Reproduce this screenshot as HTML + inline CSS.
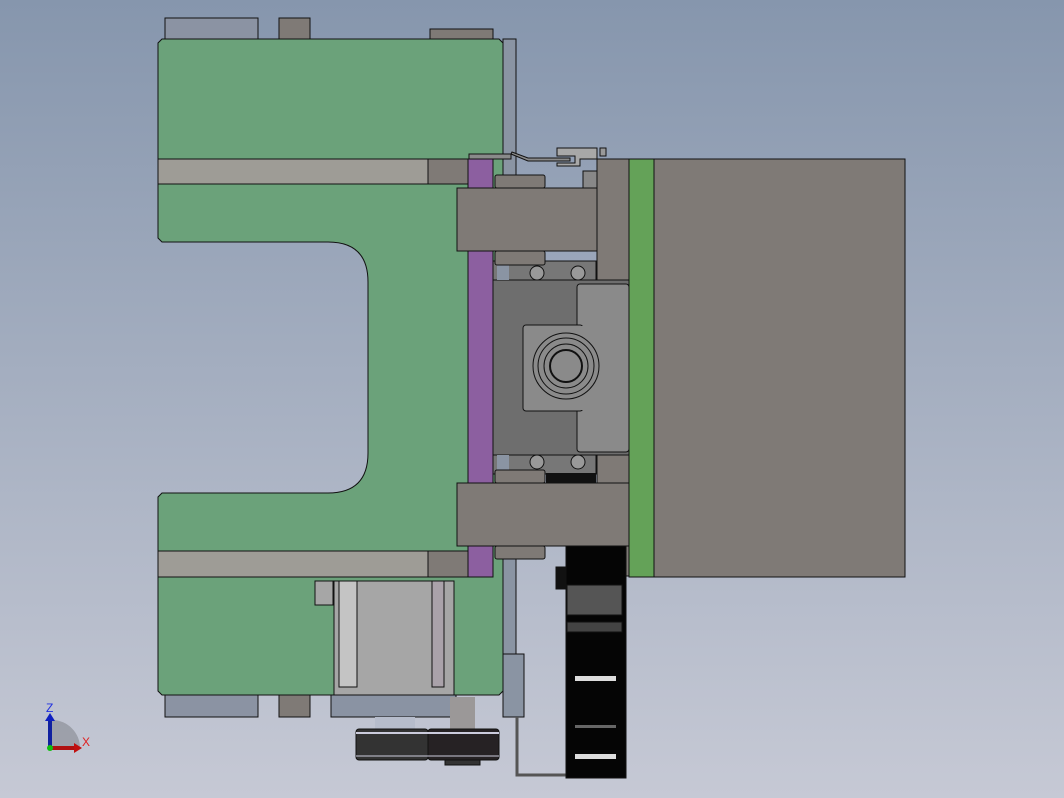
<!DOCTYPE html>
<html><head><meta charset="utf-8"><style>
html,body{margin:0;padding:0;width:1064px;height:798px;overflow:hidden}
svg{display:block}
</style></head><body>
<svg width="1064" height="798" viewBox="0 0 1064 798" xmlns="http://www.w3.org/2000/svg" stroke="#111" stroke-width="1">
<defs>
<linearGradient id="bg" x1="0" y1="0" x2="0" y2="1">
<stop offset="0" stop-color="#8696ad"/><stop offset="1" stop-color="#c6c9d5"/>
</linearGradient>
</defs>
<rect width="1064" height="798" fill="url(#bg)" stroke="none"/>
<!-- top blocks -->
<rect x="165" y="18" width="93" height="21" fill="#8b93a3"/>
<rect x="279" y="18" width="31" height="21" fill="#7f7a76"/>
<rect x="430" y="29" width="63" height="10" fill="#7f7a76"/>
<!-- bottom blocks -->
<rect x="165" y="695" width="93" height="22" fill="#8b93a3"/>
<rect x="279" y="695" width="31" height="22" fill="#7f7a76"/>
<!-- right vertical strip -->
<rect x="503" y="39" width="13" height="615" fill="#8a94a3"/>
<rect x="503" y="654" width="21" height="63" fill="#8a94a3"/>
<!-- wire -->
<path d="M517 717 L517 775 L566 775" fill="none" stroke="#555" stroke-width="3"/>
<!-- main green frame -->
<path d="M162 39 L499 39 L503 43 L503 691 L499 695 L162 695 L158 691 L158 497 L162 493 L328 493 Q368 493 368 453 L368 282 Q368 242 328 242 L162 242 L158 238 L158 43 Z" fill="#6ba27a"/>
<!-- strips -->
<rect x="158" y="159" width="270" height="25" fill="#9e9c96"/>
<rect x="428" y="159" width="40" height="25" fill="#7f7a76"/>
<rect x="158" y="551" width="270" height="26" fill="#9e9c96"/>
<rect x="428" y="551" width="40" height="26" fill="#7f7a76"/>
<!-- motor -->
<rect x="315" y="581" width="18" height="24" fill="#a6a6a6"/>
<rect x="334" y="581" width="120" height="114" fill="#a6a6a6"/>
<rect x="339" y="581" width="18" height="106" fill="#c4c4c4"/>
<rect x="432" y="581" width="12" height="106" fill="#aaa2aa"/>
<rect x="331" y="695" width="125" height="22" fill="#8a93a3"/>
<rect x="375" y="717" width="40" height="12" fill="#b6bccb" stroke="none"/>
<rect x="450" y="697" width="25" height="32" fill="#9b9898" stroke="none"/>
<rect x="356" y="729" width="72" height="31" rx="3" fill="#333"/>
<rect x="428" y="729" width="71" height="31" rx="3" fill="#262224"/>
<line x1="356" y1="733" x2="499" y2="733" stroke="#ccd" stroke-width="2"/>
<line x1="356" y1="756" x2="499" y2="756" stroke="#ccd" stroke-width="1"/>
<rect x="445" y="760" width="35" height="5" fill="#333"/>
<!-- purple -->
<rect x="468" y="159" width="25" height="418" fill="#8c5fa0"/>
<!-- upper mechanism bits -->
<rect x="469" y="154" width="42" height="5" fill="#8a8a8a"/>
<path d="M511 154 L528 161 L570 161 L570 158 L528 158 L512 152 Z" fill="#8a8a8a"/>
<path d="M557 148 L597 148 L597 159 L580 159 L580 166 L557 166 L557 163 L575 163 L575 156 L557 156 Z" fill="#a8a8a8"/>
<rect x="600" y="148" width="6" height="8" fill="#999"/>
<rect x="583" y="171" width="15" height="17" fill="#888"/>
<rect x="495" y="175" width="50" height="13" rx="2" fill="#7f7a76"/>
<!-- center housing -->
<rect x="493" y="280" width="136" height="175" fill="#6e6e6e"/>
<rect x="577" y="284" width="52" height="168" rx="3" fill="#8a8a8a"/>
<rect x="523" y="325" width="60" height="86" rx="3" fill="#8a8a8a"/>
<rect x="577" y="326" width="10" height="84" fill="#8a8a8a" stroke="none"/>
<g fill="none">
<circle cx="566" cy="366" r="33"/><circle cx="566" cy="366" r="28"/>
<circle cx="566" cy="366" r="22"/><circle cx="566" cy="366" r="16" stroke-width="2"/>
</g>
<!-- bolt rails -->
<rect x="493" y="261" width="103" height="19" fill="#777"/>
<rect x="493" y="455" width="103" height="19" fill="#777"/>
<rect x="497" y="262" width="12" height="18" fill="#8a94a3" stroke="none"/>
<rect x="497" y="455" width="12" height="18" fill="#8a94a3" stroke="none"/>
<g fill="#999"><circle cx="537" cy="273" r="7"/><circle cx="578" cy="273" r="7"/>
<circle cx="537" cy="462" r="7"/><circle cx="578" cy="462" r="7"/></g>
<rect x="546" y="473" width="50" height="10" fill="#111" stroke="none"/>
<!-- grey blocks -->
<rect x="457" y="188" width="172" height="63" fill="#7f7a76"/>
<rect x="495" y="251" width="50" height="14" rx="2" fill="#7f7a76"/>
<rect x="597" y="159" width="32" height="121" fill="#7f7a76"/>
<rect x="457" y="483" width="172" height="63" fill="#7f7a76"/>
<rect x="495" y="470" width="50" height="13" rx="2" fill="#7f7a76"/>
<rect x="495" y="546" width="50" height="13" rx="2" fill="#7f7a76"/>
<rect x="597" y="455" width="32" height="28" fill="#7f7a76"/>
<rect x="597" y="546" width="32" height="30" fill="#7f7a76"/>
<!-- cable chain -->
<rect x="566" y="546" width="60" height="232" fill="#050505"/>
<rect x="556" y="567" width="10" height="22" fill="#111"/>
<rect x="567" y="585" width="55" height="30" fill="#555"/>
<rect x="567" y="622" width="55" height="10" fill="#444"/>
<rect x="575" y="676" width="41" height="5" fill="#ddd" stroke="none"/>
<rect x="575" y="725" width="41" height="3" fill="#666" stroke="none"/>
<rect x="575" y="754" width="41" height="5" fill="#ddd" stroke="none"/>
<!-- green strip & motor body -->
<rect x="629" y="159" width="25" height="418" fill="#64a258"/>
<rect x="654" y="159" width="251" height="418" fill="#7f7a76"/>
<!-- axes -->
<path d="M52 720 A28 28 0 0 1 80 748 L52 748 Z" fill="#8d9099" stroke="none" opacity="0.7"/>
<line x1="50" y1="748" x2="50" y2="720" stroke="#1020a0" stroke-width="4"/>
<path d="M45 721 L50 713 L55 721 Z" fill="#1020c0" stroke="none"/>
<line x1="50" y1="748" x2="75" y2="748" stroke="#b01010" stroke-width="4"/>
<path d="M74 743 L82 748 L74 753 Z" fill="#c01010" stroke="none"/>
<circle cx="50" cy="748" r="3" fill="#10c010" stroke="none"/>
<text x="46" y="712" font-family="Liberation Sans, sans-serif" font-size="12" fill="#2030e0" stroke="none">Z</text>
<text x="82" y="746" font-family="Liberation Sans, sans-serif" font-size="12" fill="#e02020" stroke="none">X</text>
</svg>
</body></html>
